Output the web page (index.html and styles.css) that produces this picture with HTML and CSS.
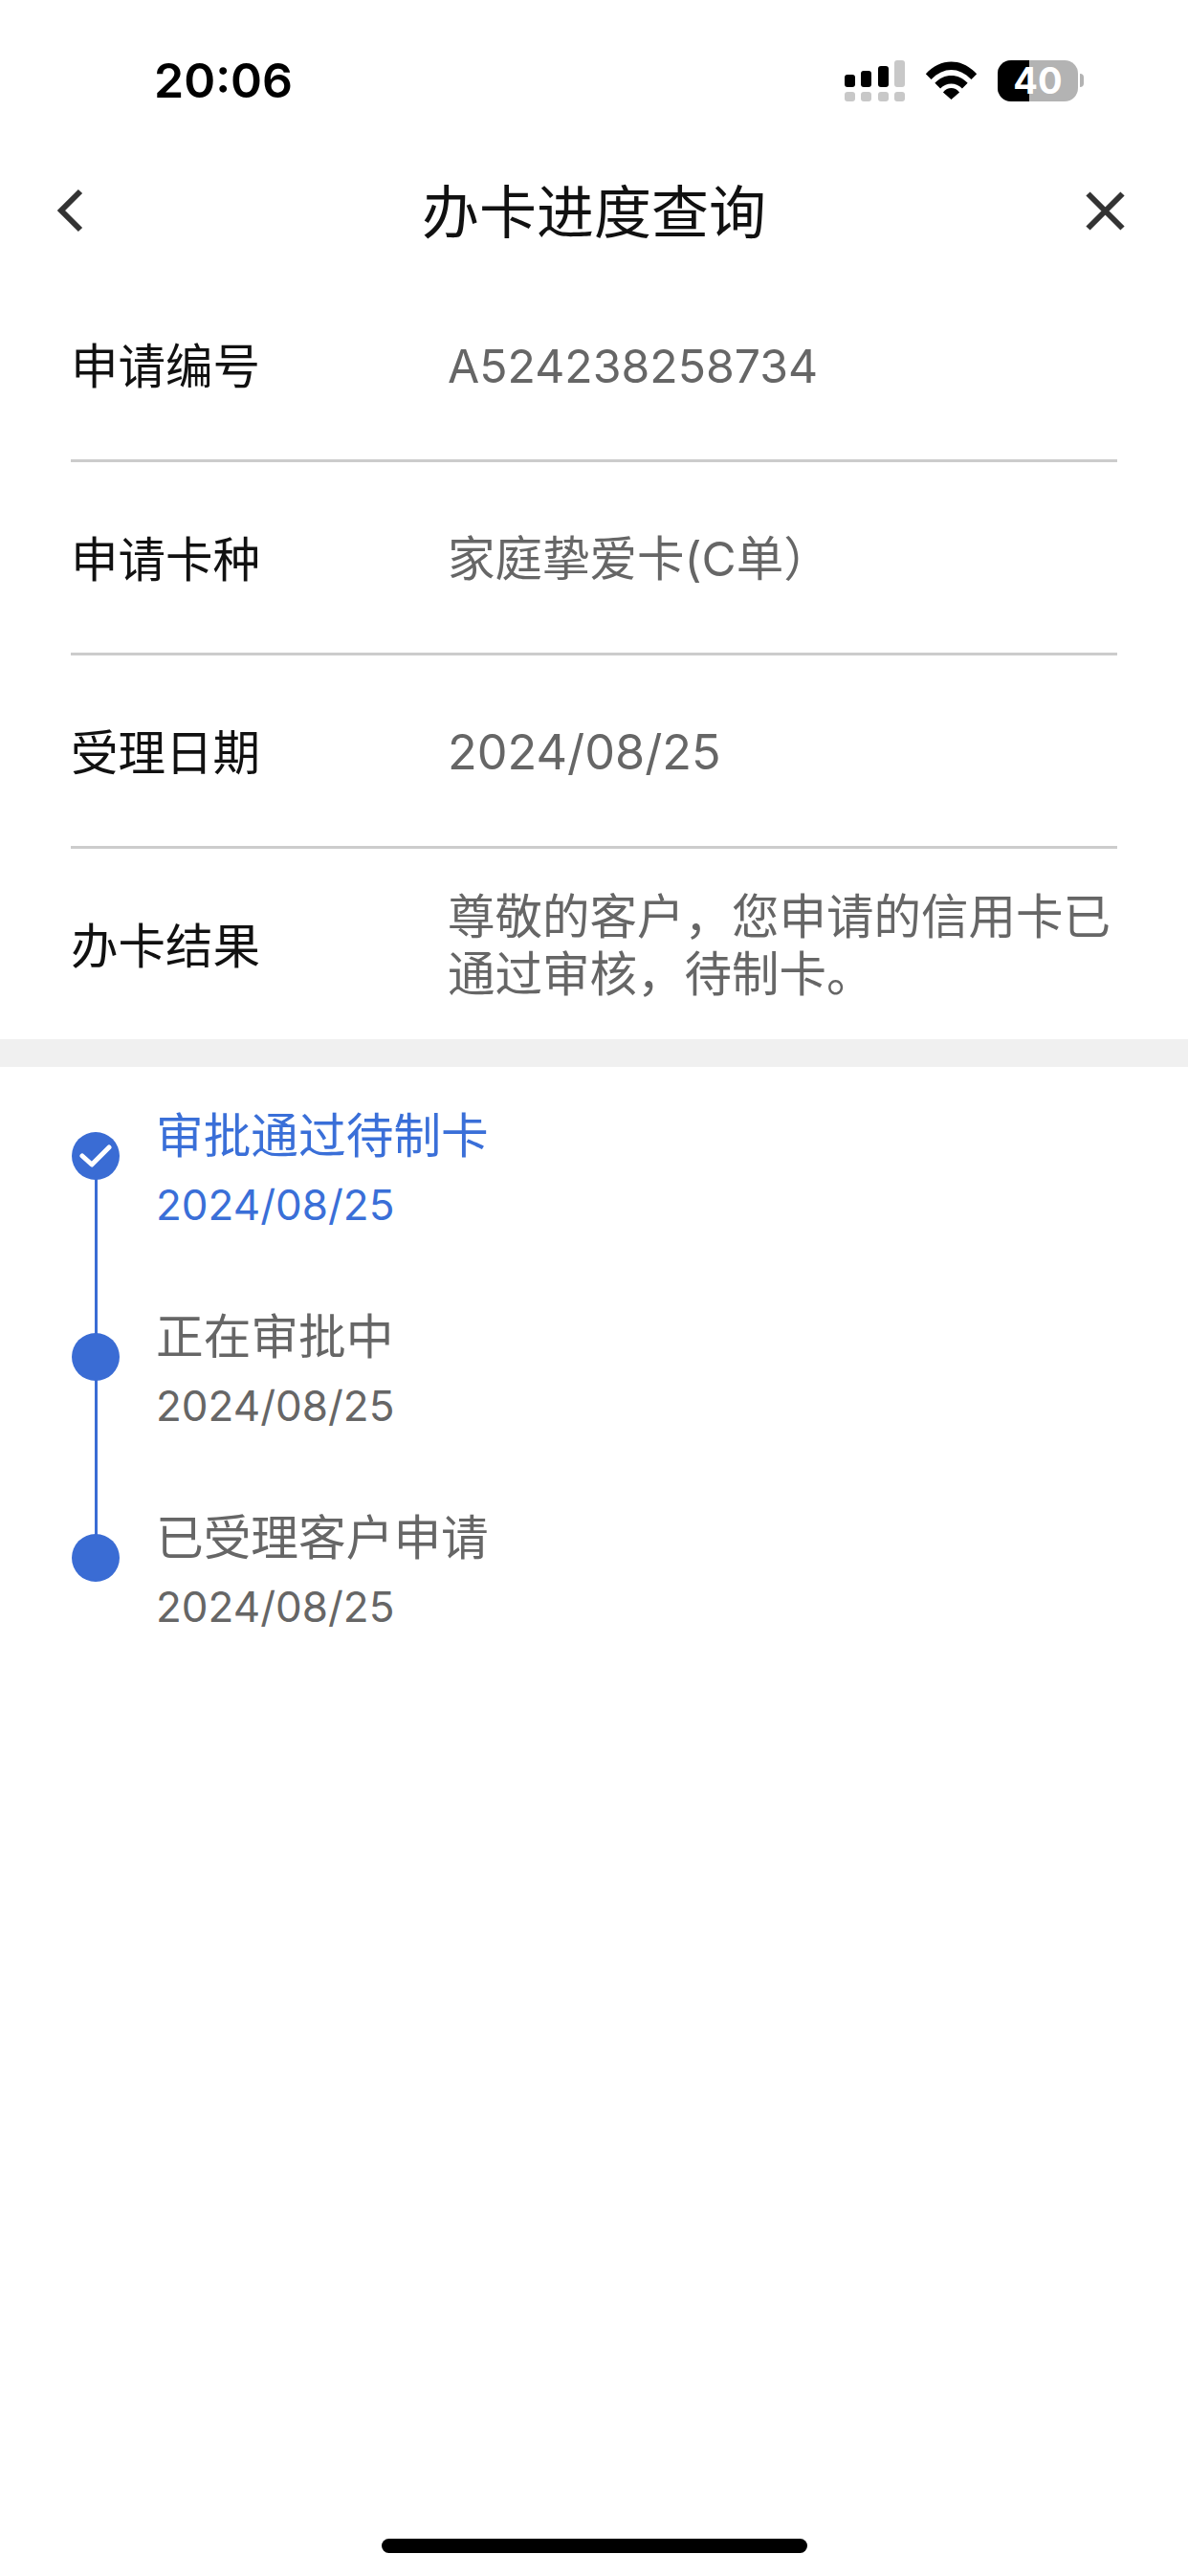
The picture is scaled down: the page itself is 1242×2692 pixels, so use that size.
FILE: index.html
```html
<!DOCTYPE html>
<html lang="zh-CN">
<head>
    <meta charset="UTF-8">
    <meta name="viewport" content="width=device-width, initial-scale=1.0">
    <title>办卡进度查询</title>
    <link rel="stylesheet" href="styles.css">
</head>
<body>

<div class="status-bar">
    <div class="status-time">20:06</div>
    <div class="status-icons">
        <svg class="signal" width="63" height="43" viewBox="0 0 63 43">
            <rect x="0" y="15" width="11" height="13" rx="3" fill="#000"/>
            <rect x="17" y="11" width="11" height="17" rx="3" fill="#000"/>
            <rect x="35" y="6" width="11" height="22" rx="3" fill="#000"/>
            <rect x="52" y="0" width="11" height="28" rx="3" fill="#c8c8c8"/>
            <rect x="0" y="33" width="11" height="10" rx="3" fill="#c8c8c8"/>
            <rect x="17" y="33" width="11" height="10" rx="3" fill="#c8c8c8"/>
            <rect x="35" y="33" width="11" height="10" rx="3" fill="#c8c8c8"/>
            <rect x="52" y="33" width="11" height="10" rx="3" fill="#c8c8c8"/>
        </svg>
        <svg class="wifi" width="55" height="40" viewBox="0 0 56 42">
            <path d="M0 14 C16 -4 40 -4 56 14 L50 20 C36 6 20 6 6 20 Z" fill="#000"/>
            <path d="M10 24 C20 13 36 13 46 24 L40 30 C33 23 23 23 16 30 Z" fill="#000"/>
            <path d="M19 34 C24 28 32 28 37 34 L28 42 Z" fill="#000"/>
        </svg>
        <div class="battery">
            <div class="battery-body"><span class="battery-level"></span><span class="battery-text">40</span></div>
            <div class="battery-tip"></div>
        </div>
    </div>
</div>

<div class="nav-bar">
    <div class="nav-side">
        <svg width="30" height="48" viewBox="0 0 30 48">
            <path d="M25 4 L5 24 L25 44" fill="none" stroke="#333" stroke-width="6"/>
        </svg>
    </div>
    <div class="nav-title">办卡进度查询</div>
    <div class="nav-side nav-side-right">
        <svg width="41" height="41" viewBox="0 0 41 41">
            <path d="M2.5 2.5 L38.5 38.5 M38.5 2.5 L2.5 38.5" fill="none" stroke="#333" stroke-width="6"/>
        </svg>
    </div>
</div>

<div class="info-list">
    <div class="info-row">
        <div class="info-label">申请编号</div>
        <div class="info-value info-code">A524238258734</div>
    </div>
    <div class="info-row">
        <div class="info-label">申请卡种</div>
        <div class="info-value">家庭挚爱卡(C单）</div>
    </div>
    <div class="info-row">
        <div class="info-label">受理日期</div>
        <div class="info-value info-date">2024/08/25</div>
    </div>
    <div class="info-row">
        <div class="info-label">办卡结果</div>
        <div class="info-value">尊敬的客户，您申请的信用卡已通过审核，待制卡。</div>
    </div>
</div>

<div class="band"></div>

<div class="timeline">
    <div class="step done">
        <div class="step-dot">
            <svg width="34" height="24" viewBox="0 0 34 24">
                <path d="M3 12 L13 21 L31 3" fill="none" stroke="#fff" stroke-width="5" stroke-linecap="round" stroke-linejoin="round"/>
            </svg>
        </div>
        <div class="step-title">审批通过待制卡</div>
        <div class="step-date">2024/08/25</div>
    </div>
    <div class="step">
        <div class="step-dot"></div>
        <div class="step-title">正在审批中</div>
        <div class="step-date">2024/08/25</div>
    </div>
    <div class="step">
        <div class="step-dot"></div>
        <div class="step-title">已受理客户申请</div>
        <div class="step-date">2024/08/25</div>
    </div>
</div>

<div class="home-bar"></div>

</body>
</html>
```

FILE: styles.css
```css
* {
    box-sizing: border-box;
}
body {
    margin: 0;
    width: 1242px;
    height: 2692px;
    position: relative;
    background-color: white;
    font-family: Inter, "Noto Sans CJK SC", sans-serif;
    overflow: hidden;
}
.status-bar {
    height: 170px;
    padding: 0 109px 2px 161px;
    display: flex;
    justify-content: space-between;
    align-items: center;
}
.status-time {
    font-size: 50px;
    font-weight: 600;
    color: #000;
}
.status-icons {
    display: flex;
    align-items: center;
    gap: 21px;
}
.battery {
    display: flex;
    align-items: center;
    gap: 2px;
}
.battery-body {
    position: relative;
    width: 84px;
    height: 43px;
    border-radius: 14px;
    background-color: #b3b3b3;
}
.battery-level {
    position: absolute;
    left: 0;
    top: 0;
    bottom: 0;
    width: 33px;
    border-radius: 14px 0 0 14px;
    background-color: #000;
}
.battery-text {
    position: absolute;
    left: 0;
    right: 0;
    top: 0;
    line-height: 43px;
    text-align: center;
    font-size: 38px;
    font-weight: 700;
    color: white;
}
.battery-tip {
    width: 4px;
    height: 14px;
    background-color: #b3b3b3;
    border-radius: 0 5px 5px 0;
}
.nav-bar {
    height: 100px;
    display: flex;
    justify-content: space-between;
    align-items: center;
    padding: 0 66px 0 59px;
}
.nav-side {
    width: 107px;
    display: flex;
}
.nav-side-right {
    width: 100px;
    justify-content: flex-end;
}
.nav-title {
    padding-bottom: 5px;
    font-size: 60px;
    color: #111;
}
.info-list {
    margin-top: 11px;
    padding: 0 74px;
}
.info-row {
    display: flex;
    align-items: center;
    height: 202px;
    border-bottom: 3px solid #ccc;
}
.info-row:last-child {
    height: 199px;
    border-bottom: none;
}
.info-label {
    width: 394px;
    flex-shrink: 0;
    padding-bottom: 2px;
    font-size: 49.5px;
    color: #111;
}
.info-value {
    padding-top: 3px;
    font-size: 49.5px;
    line-height: 60px;
    color: #666;
}
.info-code {
    padding-top: 5px;
    font-size: 48.2px;
}
.info-date {
    padding-top: 3px;
    font-size: 50.4px;
}
.band {
    height: 29px;
    background-color: #f0f0f0;
}
.timeline {
    padding: 42px 0 0 163px;
}
.step {
    position: relative;
    height: 210px;
}
.step-title {
    font-size: 49.7px;
    line-height: 60px;
    color: #666;
}
.step-date {
    margin-top: 12px;
    font-size: 44px;
    line-height: 60px;
    color: #666;
}
.done .step-title,
.done .step-date {
    color: #3a6fd8;
}
.step-dot {
    position: absolute;
    left: -88px;
    top: 26px;
    width: 50px;
    height: 50px;
    border-radius: 50%;
    background-color: #3a6cd4;
    display: flex;
    align-items: center;
    justify-content: center;
}
/* line running down to the next dot */
.step::before {
    content: "";
    position: absolute;
    left: -64px;
    top: 51px;
    width: 3px;
    height: 210px;
    background-color: #3a6cd4;
}
.step:last-child::before {
    display: none;
}
.home-bar {
    position: absolute;
    left: 399px;
    bottom: 24px;
    width: 445px;
    height: 15px;
    border-radius: 8px;
    background-color: #000;
}
```
